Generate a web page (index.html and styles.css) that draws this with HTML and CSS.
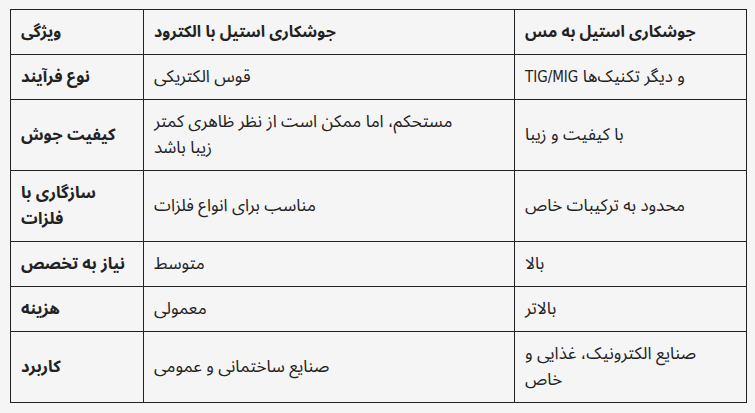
FILE: index.html
```html
<!DOCTYPE html>
<html lang="fa">
<head>
<meta charset="utf-8">
<title>مقایسه جوشکاری استیل</title>
<link rel="stylesheet" href="styles.css">
</head>
<body>
<table class="compare">
  <colgroup>
    <col class="c-feature">
    <col class="c-electrode">
    <col class="c-copper">
  </colgroup>
  <thead>
    <tr>
      <th>ویژگی</th>
      <th>جوشکاری استیل با الکترود</th>
      <th>جوشکاری استیل به مس</th>
    </tr>
  </thead>
  <tbody>
    <tr>
      <th>نوع فرآیند</th>
      <td>قوس الکتریکی</td>
      <td><span class="latin">TIG/MIG</span> و دیگر تکنیک‌ها</td>
    </tr>
    <tr>
      <th>کیفیت جوش</th>
      <td>مستحکم، اما ممکن است از نظر ظاهری کمتر<br>زیبا باشد</td>
      <td>با کیفیت و زیبا</td>
    </tr>
    <tr>
      <th>سازگاری با فلزات</th>
      <td>مناسب برای انواع فلزات</td>
      <td>محدود به ترکیبات خاص</td>
    </tr>
    <tr>
      <th>نیاز به تخصص</th>
      <td>متوسط</td>
      <td>بالا</td>
    </tr>
    <tr>
      <th>هزینه</th>
      <td>معمولی</td>
      <td>بالاتر</td>
    </tr>
    <tr>
      <th>کاربرد</th>
      <td>صنایع ساختمانی و عمومی</td>
      <td>صنایع الکترونیک، غذایی و<br>خاص</td>
    </tr>
  </tbody>
</table>
</body>
</html>
```
FILE: styles.css
```css
html, body {
  background: #f5f5f5;
}
body {
  margin: 0;
  padding: 9px 10px;
  font-family: "Noto Sans Arabic", "Noto Sans Arabic UI", "DejaVu Sans", sans-serif;
  font-size: 16px;
  color: #222;
}
.compare {
  border-collapse: collapse;
  width: 736px;
  table-layout: fixed;
}
.c-feature { width: 133px; }
.c-electrode { width: 371px; }
.c-copper { width: 232px; }
.compare th,
.compare td {
  border: 1px solid #222;
  padding: 9px 10px;
  line-height: 26px;
  text-align: left;
  vertical-align: middle;
}
.compare th {
  font-weight: bold;
  font-size: 16.5px;
}
.compare thead th {
  font-size: 16px;
}
.compare td {
  font-weight: normal;
  font-size: 17px;
}
.latin {
  font-family: "DejaVu Sans Condensed", "DejaVu Sans", sans-serif;
  font-size: 15px;
}
```
